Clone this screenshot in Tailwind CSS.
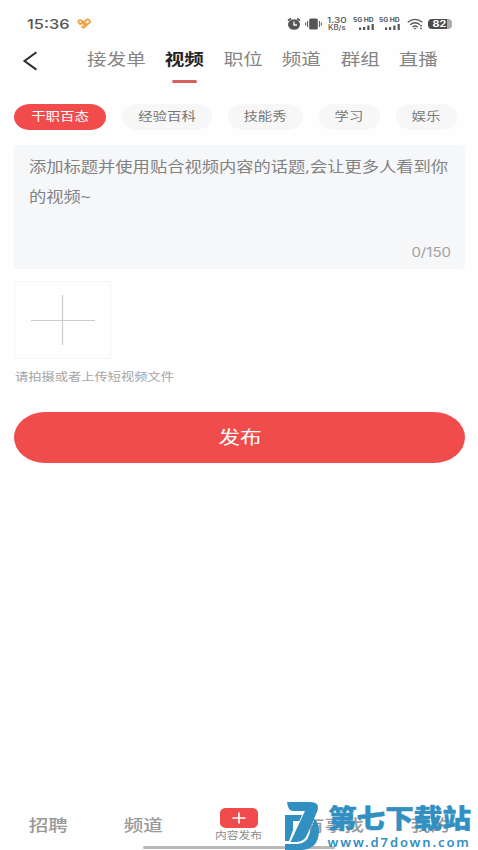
<!DOCTYPE html>
<html lang="zh-CN">
<head>
<meta charset="utf-8">
<title>视频发布</title>
<script src="https://cdn.jsdelivr.net/npm/@tailwindcss/browser@4"></script>
</head>
<body class="bg-white">
<div class="relative flex h-[850px] w-[478px] flex-col overflow-hidden bg-[#fefefe] font-['Noto_Sans','Noto_Sans_CJK_SC',sans-serif] whitespace-nowrap">

  <!-- Status bar -->
  <header class="flex h-[40px] shrink-0 items-center pt-[7px] pl-[27px] text-[#555]">
    <div class="w-[50px] pb-[2px]"><span class="inline-block origin-left scale-x-[1.2] font-['Inter','Noto_Sans',sans-serif] text-[13.7px] font-medium">15:36</span></div>
    <svg class="h-[11px] w-[14px]" viewBox="0 0 14 11"><path d="M1 3.5Q2.5 1 5 3L8 5.5M1 3.5L3.2 6.2L5 4.8L8.2 7.5M4.5 8L6.5 9.8L13 4.2Q12.8 1 10 1.5L6.8 4.2L9.4 6.2" fill="none" stroke="#eea345" stroke-width="1.9"/></svg>
    <div class="ml-[196px] flex h-[20px] items-center">
      <svg class="h-[14px] w-[14px]" viewBox="0 0 14 14"><ellipse cx="7" cy="7.5" rx="6" ry="5.2" fill="#555"/><path d="M1 3.5L4 1.5M10 1.5L13 3.5" stroke="#555" stroke-width="1.6"/><path d="M7 4.5V8H10" fill="none" stroke="#fff" stroke-width="1.3"/></svg>
      <svg class="ml-[4px] h-[14px] w-[17px]" viewBox="0 0 17 14"><rect x="4.2" y="1.5" width="8.6" height="11" rx="1.5" fill="#555"/><path d="M2.6 4V10M.7 5.5V8.5M14.4 4V10M16.3 5.5V8.5" stroke="#555" stroke-width="1"/></svg>
      <div class="ml-[4px] flex h-[16px] w-[21px] flex-col items-center font-['Inter',sans-serif] text-[8px] leading-[8px] font-medium">
        <span class="inline-block scale-x-[1.25]">1.30</span><span class="inline-block scale-x-[1.12] text-[7px]">KB/s</span>
      </div>
      <div class="ml-[5px] flex h-[16px] w-[23px] flex-col items-center font-['Inter',sans-serif] text-[6px] leading-[7px] font-bold">
        <span class="inline-block scale-x-[1.12]">5G HD</span>
        <svg class="ml-[5px] h-[7px] w-[17px]" viewBox="0 0 17 7"><path d="M1 4.5H3.2V7H1zM5 4H7.2V7H5zM9.3 2.5H11.5V7H9.3zM13.6 1H15.8V7H13.6z" fill="#555"/></svg>
      </div>
      <div class="ml-[3px] flex h-[16px] w-[23px] flex-col items-center font-['Inter',sans-serif] text-[6px] leading-[7px] font-bold">
        <span class="inline-block scale-x-[1.12]">5G HD</span>
        <svg class="ml-[5px] h-[7px] w-[17px]" viewBox="0 0 17 7"><path d="M1 4.5H3.2V7H1zM5 4H7.2V7H5zM9.3 2.5H11.5V7H9.3zM13.6 1H15.8V7H13.6z" fill="#555"/></svg>
      </div>
      <svg class="ml-[6px] h-[12px] w-[17px]" viewBox="0 0 17 12"><path d="M.8 4.2Q8 -1.5 15.4 4.2M3.2 6.7Q8 2.8 13 6.7M5.6 9Q8 7 10.7 9" fill="none" stroke="#555" stroke-width="1.4"/><path d="M6.5 10L8.1 11.6L9.8 10z" fill="#555"/><path d="M14 7V8.5M14 9.8V11.3" stroke="#555" stroke-width="1.6"/></svg>
      <div class="ml-[4px] flex h-[10px] w-[24px] items-center overflow-hidden rounded-[4px] bg-[linear-gradient(to_right,#4c4c4c_78%,#aaa_78%)] text-white">
        <span class="inline-block w-[23px] scale-x-[1.2] text-center font-['Inter',sans-serif] text-[9px] leading-[10px] font-bold">82</span>
      </div>
    </div>
  </header>

  <!-- Category tabs -->
  <nav class="flex h-[64px] shrink-0 text-[16.3px] leading-[24px] text-[#858585]">
    <svg class="mt-[10px] ml-[22px] h-[22px] w-[16px]" viewBox="0 0 16 22"><path d="M14.4 2.2L2.5 11L14.4 19.6" fill="none" stroke="#2b2b2b" stroke-width="2"/></svg>
    <div class="ml-[48.5px] flex gap-[19px] pt-[7px]">
      <div class="flex w-[59px] justify-center"><span class="h-[24px] scale-x-[1.2]">接发单</span></div>
      <div class="flex w-[40px] flex-col items-center">
        <span class="scale-x-[1.2] font-bold text-[#252525]">视频</span>
        <i class="mt-[9px] h-[3px] w-[25px] rounded-full bg-[#d9605f]"></i>
      </div>
      <div class="flex w-[39.5px] justify-center"><span class="h-[24px] scale-x-[1.2]">职位</span></div>
      <div class="flex w-[39.5px] justify-center"><span class="h-[24px] scale-x-[1.2]">频道</span></div>
      <div class="flex w-[39.5px] justify-center"><span class="h-[24px] scale-x-[1.2]">群组</span></div>
      <div class="flex w-[39.5px] justify-center"><span class="h-[24px] scale-x-[1.2]">直播</span></div>
    </div>
  </nav>

  <!-- Topic chips -->
  <div class="flex h-[26px] shrink-0 gap-[16px] pl-[14px] text-[12px] leading-[25px] text-[#777]">
    <div class="flex w-[91.5px] justify-center rounded-[16px/13px] bg-[#f24b4c] text-white"><span class="scale-x-[1.2]">干职百态</span></div>
    <div class="flex w-[90.5px] justify-center rounded-[16px/13px] bg-[#f7f7f7]"><span class="scale-x-[1.2]">经验百科</span></div>
    <div class="flex w-[75px] justify-center rounded-[16px/13px] bg-[#f7f7f7]"><span class="scale-x-[1.2]">技能秀</span></div>
    <div class="flex w-[61px] justify-center rounded-[16px/13px] bg-[#f7f7f7]"><span class="scale-x-[1.2]">学习</span></div>
    <div class="flex w-[61px] justify-center rounded-[16px/13px] bg-[#f7f7f7]"><span class="scale-x-[1.2]">娱乐</span></div>
  </div>

  <!-- Caption field -->
  <section class="mt-[15px] ml-[14px] flex h-[124px] w-[451px] shrink-0 flex-col justify-between rounded-[3px] bg-[#f6f7f9] pt-[7px] pr-[14px] pb-[6px] pl-[15px]">
    <p class="origin-left scale-x-[1.2] text-[14.4px] leading-[30px] text-[#828282]">添加标题并使用贴合视频内容的话题,会让更多人看到你<br>的视频~</p>
    <span class="origin-right scale-x-[1.2] self-end font-['Inter',sans-serif] text-[12.5px] leading-[20px] text-[#a0a0a0]">0/150</span>
  </section>

  <!-- Upload -->
  <div class="mt-[12px] ml-[14px] flex h-[78px] w-[97px] shrink-0 items-center justify-center border border-[#f5f5f5]">
    <svg class="h-[52px] w-[66px]" viewBox="0 0 66 52"><path d="M1 26.5H65M32.5 1V51" stroke="#cbcbcb" stroke-width="1.2"/></svg>
  </div>
  <p class="mt-[8px] ml-[14.5px] origin-left scale-x-[1.2] text-[11.05px] leading-[20px] text-[#a5a5a5]">请拍摄或者上传短视频文件</p>
  <button class="mt-[25px] ml-[14px] flex h-[51px] w-[451px] shrink-0 items-center justify-center rounded-[31px/25.5px] bg-[#f14c4c] text-[18px] text-white"><span class="scale-x-[1.2]">发布</span></button>

  <!-- Bottom navigation -->
  <footer class="mt-auto flex h-[50px] shrink-0 text-[16.3px] font-medium text-[#999]">
    <div class="flex w-[96px] justify-center pt-[13px]"><span class="h-[24px] scale-x-[1.2] leading-[24px]">招聘</span></div>
    <div class="flex w-[96px] justify-center pt-[13px]"><span class="h-[24px] scale-x-[1.2] leading-[24px]">频道</span></div>
    <div class="flex w-[96px] flex-col items-center pt-[8px]">
      <div class="flex h-[20px] w-[38px] items-center justify-center rounded-[6px/5px] bg-[#ef4b4c]">
        <svg class="h-[12px] w-[14px]" viewBox="0 0 14 12"><path d="M.5 6H13.5M7 .5V11.5" stroke="#fff" stroke-width="1.7"/></svg>
      </div>
      <span class="scale-x-[1.2] text-[9.8px] leading-[15px] font-normal text-[#8d8d8d]">内容发布</span>
    </div>
    <div class="flex w-[96px] justify-center pt-[13px]"><span class="h-[24px] scale-x-[1.2] leading-[24px]">有事找</span></div>
    <div class="flex w-[96px] justify-center pt-[13px]"><span class="h-[24px] scale-x-[1.2] leading-[24px]">我的</span></div>
  </footer>
  <i class="absolute bottom-[1.5px] left-[143px] h-[2.5px] w-[192px] rounded-full bg-[#b9bab5]"></i>

  <!-- Site mark -->
  <div class="absolute top-[800px] left-[284px] flex h-[50px] w-[190px] text-[#318fc1]">
    <svg class="h-[50px] w-[36px] shrink-0" viewBox="0 0 36 50">
      <path d="M1 15H18L15.500 21H9V30L5 41H1z" fill="#318fc1"/>
      <path d="M30.500 19Q35 23 35 31Q34.500 50 16 50H1V44H14Q23 43 25 35z" fill="#318fc1"/>
      <path d="M3 2H26Q34.500 2 34 8Q34 10 32 14L23 35Q20 42 12 42H6.500L21 11H9Q4 11 3 2z" fill="#318fc1"/>
    </svg>
    <div class="flex flex-col pl-[7.5px]">
      <span class="origin-left scale-x-[1.1] text-[26px] leading-[36px] font-black [-webkit-text-stroke:0.4px_#318fc1]">第七下载站</span>
      <span class="font-['Noto_Sans',sans-serif] text-[13px] leading-[13px] font-semibold tracking-[1.9px]">www.d7down.com</span>
    </div>
  </div>
</div>
</body>
</html>
